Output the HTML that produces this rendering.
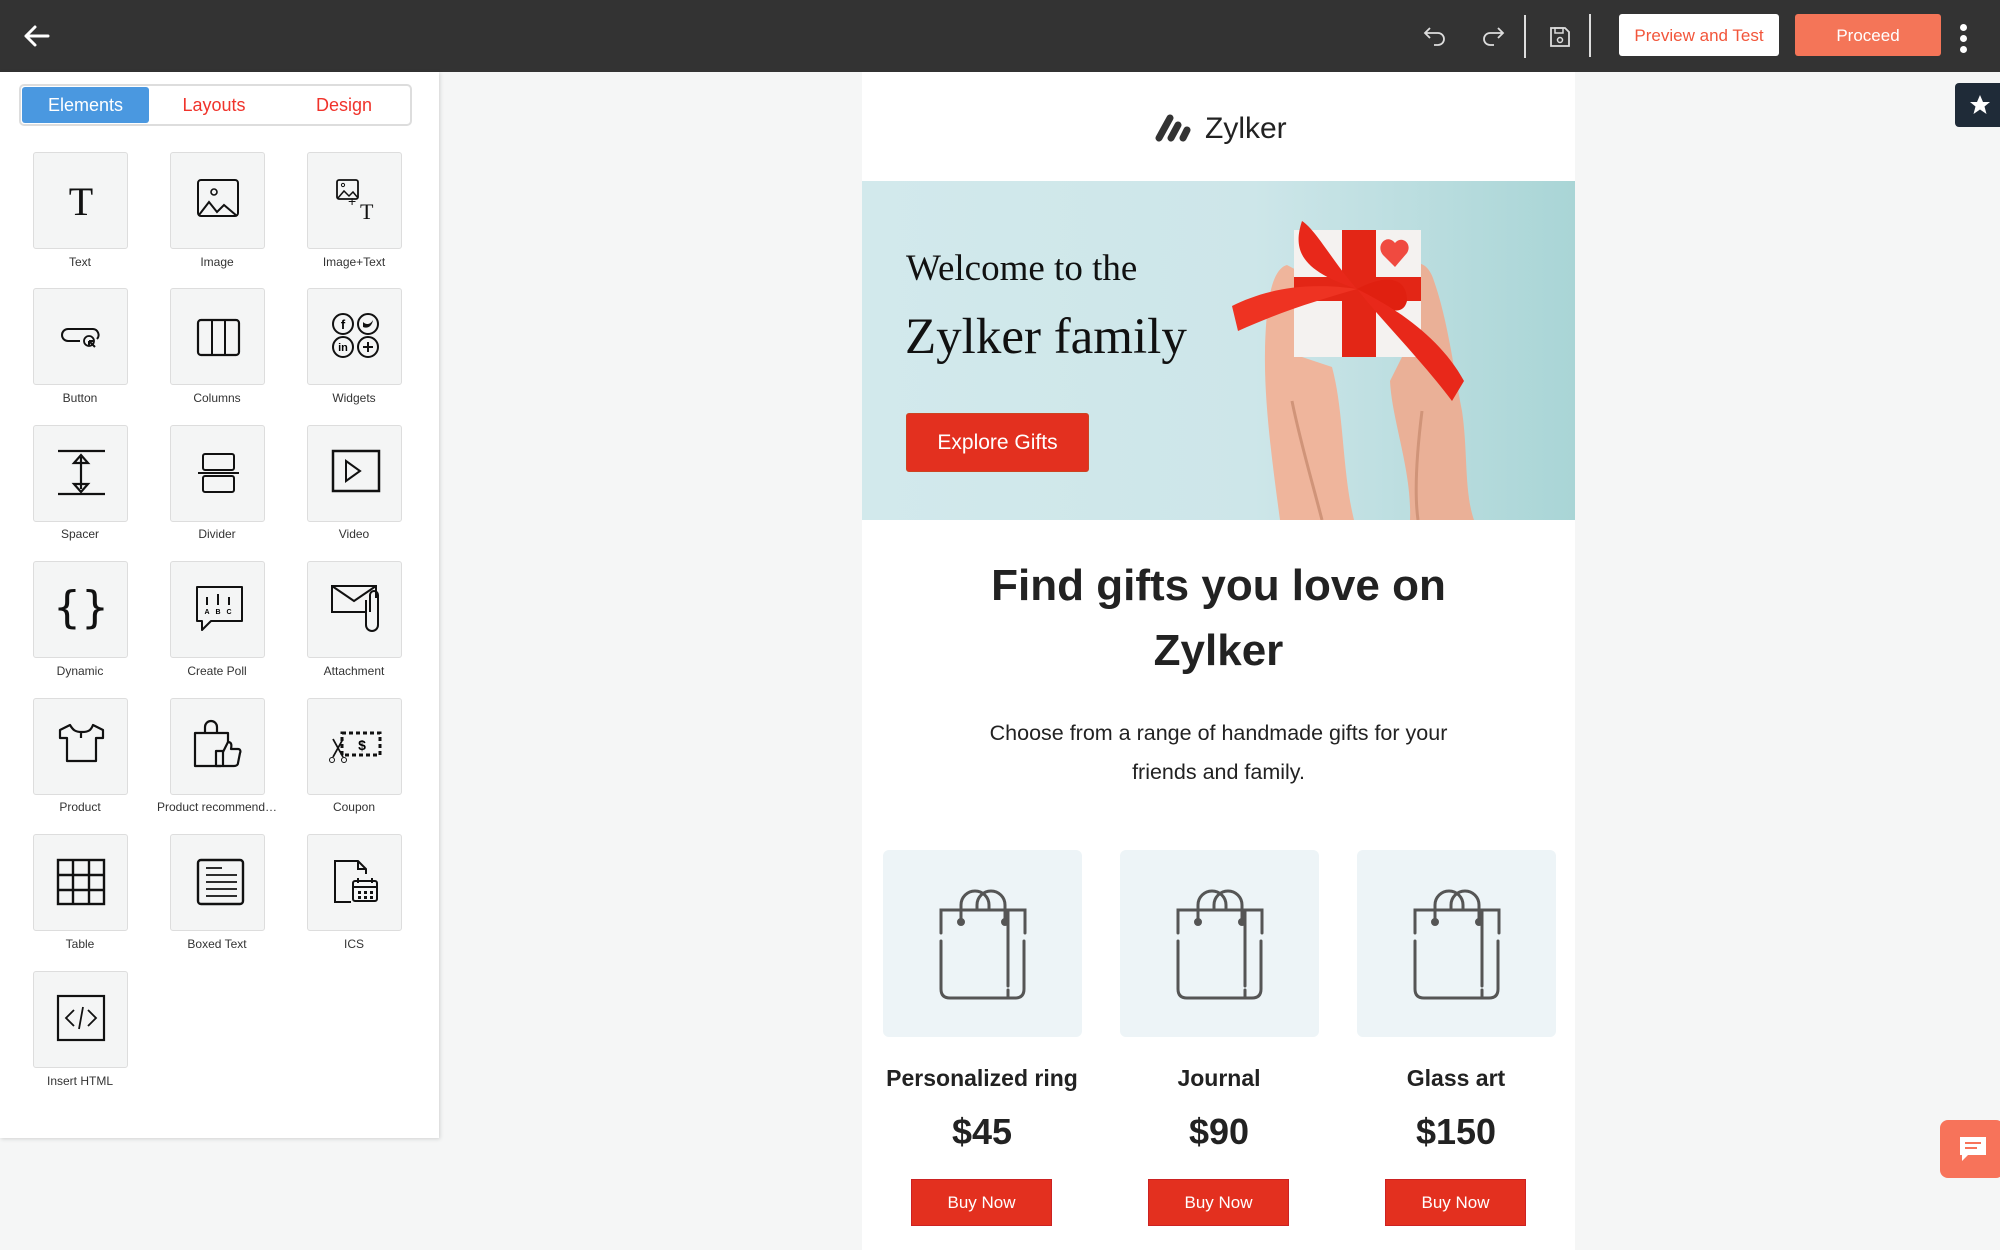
<!DOCTYPE html>
<html><head><meta charset="utf-8"><style>
*{box-sizing:border-box;margin:0;padding:0}
body{width:2000px;height:1250px;background:#f5f6f6;font-family:"Liberation Sans",Arial,sans-serif;position:relative;overflow:hidden}
.abs{position:absolute}
#top{left:0;top:0;width:2000px;height:72px;background:#333}
#panel{left:0;top:72px;width:439px;height:1066px;background:#fff;box-shadow:1px 1px 4px rgba(0,0,0,.15)}
.tabs{left:19px;top:84px;width:393px;height:42px;border:2px solid #ddd;border-radius:5px;background:#fff}
.tab{position:absolute;top:0;height:38px;line-height:38px;text-align:center;font-size:18px;color:#f0332b}
.tile{position:absolute;width:95px;height:97px;background:#f4f5f5;border:1.5px solid #ddd;border-radius:3px}
.tile svg{position:absolute;left:0;top:0}
.lbl{position:absolute;width:140px;text-align:center;font-size:12px;color:#333}
#canvas{left:862px;top:72px;width:713px;height:1178px;background:#fff}
.card{position:absolute;top:850px;width:199px;height:187px;background:#edf4f7;border-radius:6px}
.pname{position:absolute;top:1065px;width:240px;text-align:center;font-size:23px;font-weight:bold;color:#222}
.price{position:absolute;top:1111px;width:240px;text-align:center;font-size:36px;font-weight:bold;color:#222}
.buy{position:absolute;top:1179px;width:141px;height:47px;background:#e3301f;border:1px solid #c22;color:#fff;font-size:17px;line-height:45px;text-align:center}
</style></head><body>
<div id="top" class="abs">
<svg class="abs" style="left:22px;top:24px" width="28" height="24" viewBox="0 0 28 24"><path d="M26 12H4M13 3 4 12l9 9" stroke="#fff" stroke-width="3" fill="none" stroke-linecap="round" stroke-linejoin="round"/></svg>
<svg class="abs" style="left:1422px;top:24px" width="26" height="24" viewBox="0 0 26 24"><path d="M8 4 3 9l5 5M3 9h13a6 6 0 0 1 0 12h-4" stroke="#ddd" stroke-width="1.8" fill="none"/></svg>
<svg class="abs" style="left:1480px;top:24px" width="26" height="24" viewBox="0 0 26 24"><path d="M18 4l5 5-5 5M23 9H10a6 6 0 0 0 0 12h4" stroke="#ddd" stroke-width="1.8" fill="none"/></svg>
<div class="abs" style="left:1524px;top:15px;width:2px;height:43px;background:#ddd"></div>
<svg class="abs" style="left:1549px;top:26px" width="22" height="22" viewBox="0 0 22 22"><path d="M2 2h14l4 4v14H2z" stroke="#ddd" stroke-width="1.8" fill="none"/><rect x="6" y="2" width="8" height="5" stroke="#ddd" stroke-width="1.5" fill="none"/><circle cx="11" cy="14" r="2.5" stroke="#ddd" stroke-width="1.5" fill="none"/></svg>
<div class="abs" style="left:1589px;top:14px;width:2px;height:43px;background:#ddd"></div>
<div class="abs" style="left:1619px;top:14px;width:160px;height:42px;background:#fff;border-radius:3px;color:#f2553a;font-size:17px;line-height:44px;text-align:center">Preview and Test</div>
<div class="abs" style="left:1795px;top:14px;width:146px;height:42px;background:#f47558;border-radius:3px;color:#fff;font-size:17px;line-height:44px;text-align:center">Proceed</div>
<div class="abs" style="left:1960px;top:24px;width:7px;height:7px;border-radius:50%;background:#fff;box-shadow:0 11px 0 #fff,0 22px 0 #fff"></div>
</div>

<div id="panel" class="abs"></div>
<div class="tabs abs">
<div class="tab" style="left:1px;top:1px;width:127px;height:36px;line-height:36px;background:#4a98e0;color:#fff;border-radius:3px">Elements</div>
<div class="tab" style="left:128px;width:130px">Layouts</div>
<div class="tab" style="left:258px;width:130px">Design</div>
</div>

<div class="tile" style="left:33px;top:152px"><svg width="95" height="97"><text x="47" y="62" font-family="Liberation Serif" font-size="40" text-anchor="middle" fill="#111">T</text></svg></div>
<div class="lbl" style="left:10px;top:255px">Text</div>
<div class="tile" style="left:170px;top:152px"><svg width="95" height="97"><rect x="27" y="27" width="40" height="36" rx="3" stroke="#111" stroke-width="2" fill="none"/><circle cx="43" cy="39" r="3" stroke="#111" stroke-width="1.6" fill="none"/><path d="M28 62l10-13 8 10 7-7 13 11" stroke="#111" stroke-width="2" fill="none"/></svg></div>
<div class="lbl" style="left:147px;top:255px">Image</div>
<div class="tile" style="left:307px;top:152px"><svg width="95" height="97"><rect x="29" y="27" width="21" height="19" rx="2" stroke="#111" stroke-width="1.8" fill="none"/><circle cx="35" cy="32" r="1.6" stroke="#111" fill="none"/><path d="M30 45l6-7 5 5 4-4 5 6" stroke="#111" stroke-width="1.5" fill="none"/><text x="40" y="53" font-size="14" fill="#111">+</text><text x="52" y="66" font-family="Liberation Serif" font-size="22" fill="#111">T</text></svg></div>
<div class="lbl" style="left:284px;top:255px">Image+Text</div>

<div class="tile" style="left:33px;top:288px"><svg width="95" height="97"><path d="M46 52H34a6 6 0 0 1 0-12h25a6 6 0 0 1 4 10" stroke="#111" stroke-width="2" fill="none"/><circle cx="55" cy="52" r="5" stroke="#111" stroke-width="1.8" fill="none"/><path d="M55 52l6 6M55 52h4M55 52v4" stroke="#111" stroke-width="2"/></svg></div>
<div class="lbl" style="left:10px;top:391px">Button</div>
<div class="tile" style="left:170px;top:288px"><svg width="95" height="97"><rect x="27" y="31" width="41" height="35" rx="3" stroke="#111" stroke-width="2.2" fill="none"/><path d="M41 31v35M54 31v35" stroke="#111" stroke-width="2"/></svg></div>
<div class="lbl" style="left:147px;top:391px">Columns</div>
<div class="tile" style="left:307px;top:288px"><svg width="95" height="97"><g stroke="#111" stroke-width="2" fill="none"><circle cx="35" cy="35" r="10"/><circle cx="60" cy="35" r="10"/><circle cx="35" cy="58" r="10"/><circle cx="60" cy="58" r="10"/><path d="M55 58h10M60 53v10"/></g><text x="35" y="40" font-size="13" font-weight="bold" text-anchor="middle">f</text><text x="35" y="62" font-size="11" font-weight="bold" text-anchor="middle">in</text><path d="M55 33c3 3 7 3 10-2-1 6-5 9-10 7z" fill="#111"/></svg></div>
<div class="lbl" style="left:284px;top:391px">Widgets</div>

<div class="tile" style="left:33px;top:425px"><svg width="95" height="97"><g stroke="#111" stroke-width="2.2" fill="none"><path d="M24 25h47M24 68h47M47 31v32M40 37l7-8 7 8zM40 58l7 8 7-8z"/></g></svg></div>
<div class="lbl" style="left:10px;top:527px">Spacer</div>
<div class="tile" style="left:170px;top:425px"><svg width="95" height="97"><g stroke="#111" stroke-width="2" fill="none"><rect x="32" y="28" width="31" height="16" rx="2"/><rect x="32" y="50" width="31" height="16" rx="2"/><path d="M27 47h41"/></g></svg></div>
<div class="lbl" style="left:147px;top:527px">Divider</div>
<div class="tile" style="left:307px;top:425px"><svg width="95" height="97"><rect x="25" y="25" width="46" height="40" stroke="#111" stroke-width="2.5" fill="none"/><path d="M38 35l14 10-14 10z" stroke="#111" stroke-width="2" fill="none"/></svg></div>
<div class="lbl" style="left:284px;top:527px">Video</div>

<div class="tile" style="left:33px;top:561px"><svg width="95" height="97"><text x="47" y="60" font-size="44" text-anchor="middle" fill="#111" font-family="DejaVu Sans">{}</text></svg></div>
<div class="lbl" style="left:10px;top:664px">Dynamic</div>
<div class="tile" style="left:170px;top:561px"><svg width="95" height="97"><path d="M26 25h45v34H40l-9 9v-9h-5z" stroke="#111" stroke-width="2" fill="none" stroke-linejoin="round"/><path d="M36 35v8M47 32v11M58 35v8" stroke="#111" stroke-width="2"/><text x="36" y="52" font-size="7" font-weight="bold" text-anchor="middle">A</text><text x="47" y="52" font-size="7" font-weight="bold" text-anchor="middle">B</text><text x="58" y="52" font-size="7" font-weight="bold" text-anchor="middle">C</text></svg></div>
<div class="lbl" style="left:147px;top:664px">Create Poll</div>
<div class="tile" style="left:307px;top:561px"><svg width="95" height="97"><g stroke="#111" stroke-width="2" fill="none"><path d="M58 50H24V24h44v12"/><path d="M24 24l22 15 22-15"/><path d="M62 50V33a4 4 0 0 1 8 0v30a6 6 0 0 1-12 0V38"/></g></svg></div>
<div class="lbl" style="left:284px;top:664px">Attachment</div>

<div class="tile" style="left:33px;top:698px"><svg width="95" height="97"><path d="M36 26l-10 5v8h7v23h29V39h7v-8l-10-5c-2 5-4 7-11 7s-9-2-12-7zM47 33v6" stroke="#111" stroke-width="2.2" fill="none" stroke-linejoin="round"/></svg></div>
<div class="lbl" style="left:10px;top:800px">Product</div>
<div class="tile" style="left:170px;top:698px"><svg width="95" height="97"><g stroke="#111" stroke-width="2.2" fill="none" stroke-linejoin="round"><path d="M50 67H24V34h33v10"/><path d="M34 34v-6a6 6 0 0 1 12 0v6"/><rect x="45" y="52" width="7" height="15"/><path d="M52 53l5-10c3 0 4 2 3 7h7c2 0 3 2 2 4l-2 10c0 2-2 3-4 3H52"/></g></svg></div>
<div class="lbl" style="left:147px;top:800px">Product recommend…</div>
<div class="tile" style="left:307px;top:698px"><svg width="95" height="97"><rect x="34" y="34" width="38" height="22" stroke="#111" stroke-width="3" stroke-dasharray="4 3" fill="none"/><text x="54" y="51" font-size="14" font-weight="bold" text-anchor="middle">$</text><path d="M25 40l10 18M35 40l-10 18" stroke="#111" stroke-width="1.8"/><circle cx="24" cy="61" r="2.5" stroke="#111" fill="none"/><circle cx="36" cy="61" r="2.5" stroke="#111" fill="none"/></svg></div>
<div class="lbl" style="left:284px;top:800px">Coupon</div>

<div class="tile" style="left:33px;top:834px"><svg width="95" height="97"><g stroke="#111" stroke-width="2.4" fill="none"><rect x="24" y="25" width="46" height="44"/><path d="M39 25v44M55 25v44M24 40h46M24 55h46"/></g></svg></div>
<div class="lbl" style="left:10px;top:937px">Table</div>
<div class="tile" style="left:170px;top:834px"><svg width="95" height="97"><rect x="27" y="25" width="45" height="44" rx="3" stroke="#111" stroke-width="2.4" fill="none"/><path d="M35 33h16M35 40h31M35 47h31M35 54h31M35 61h31" stroke="#111" stroke-width="1.8"/></svg></div>
<div class="lbl" style="left:147px;top:937px">Boxed Text</div>
<div class="tile" style="left:307px;top:834px"><svg width="95" height="97"><g stroke="#111" stroke-width="2" fill="none"><path d="M43 67h-16V26h23l8 8v5M50 26v8h8"/><rect x="45" y="46" width="24" height="20" rx="2"/><path d="M45 52h24M50 43v5M64 43v5"/></g><g fill="#111"><rect x="50" y="56" width="3" height="3"/><rect x="56" y="56" width="3" height="3"/><rect x="62" y="56" width="3" height="3"/><rect x="50" y="61" width="3" height="3"/><rect x="56" y="61" width="3" height="3"/><rect x="62" y="61" width="3" height="3"/></g></svg></div>
<div class="lbl" style="left:284px;top:937px">ICS</div>

<div class="tile" style="left:33px;top:971px"><svg width="95" height="97"><rect x="24" y="24" width="46" height="44" stroke="#111" stroke-width="2.2" fill="none"/><path d="M40 38l-8 8 8 8M54 38l8 8-8 8M49 35l-4 22" stroke="#111" stroke-width="1.8" fill="none"/></svg></div>
<div class="lbl" style="left:10px;top:1074px">Insert HTML</div>

<div class="abs" style="left:1955px;top:83px;width:50px;height:44px;background:#1f2b38;border-radius:4px"><svg style="position:absolute;left:13px;top:10px" width="24" height="24" viewBox="0 0 24 24"><path d="M12 2l3 7h7l-5.5 4.5 2 7.5L12 16.5 5.5 21l2-7.5L2 9h7z" fill="#fff"/></svg></div>
<div class="abs" style="left:1940px;top:1120px;width:64px;height:58px;background:#f7735a;border-radius:8px"><svg style="position:absolute;left:18px;top:15px" width="30" height="28" viewBox="0 0 30 28"><path d="M2 2h26v18H10l-6 6v-6H2z" fill="#fff"/><path d="M7 8h16M7 13h12" stroke="#f7735a" stroke-width="2"/></svg></div>

<div id="canvas" class="abs"></div>
<svg class="abs" style="left:1153px;top:113px" width="44" height="30" viewBox="0 0 44 30"><g stroke="#333" stroke-width="7" stroke-linecap="round"><path d="M6 25L17 5M18 25l7-13M30 25l4-8"/></g></svg>
<div class="abs" style="left:1205px;top:112px;font-size:30px;color:#222">Zylker</div>

<div class="abs" style="left:862px;top:181px;width:713px;height:339px;background:linear-gradient(90deg,#d2e9ec 0%,#cde6e9 55%,#a9d5d6 100%)"></div>
<svg class="abs" style="left:862px;top:181px" width="713" height="339" viewBox="0 0 713 339">
<path d="M418 339C410 280 402 220 403 170C404 120 410 88 425 84L440 92L440 176L470 186C482 230 480 290 492 339Z" fill="#efb59c"/>
<path d="M548 339C550 290 530 240 528 200L540 176L541 100C550 74 566 80 572 100C586 140 592 190 600 230C606 270 602 310 612 339Z" fill="#eab097"/>
<path d="M430 220c8 40 20 80 30 119" stroke="#d09479" stroke-width="3" fill="none"/>
<path d="M560 230c-5 40-8 80-4 109" stroke="#d09479" stroke-width="3" fill="none"/>
<rect x="432" y="49" width="127" height="127" fill="#f4f2f0"/>
<rect x="480" y="49" width="34" height="127" fill="#e32616"/>
<rect x="432" y="96" width="127" height="24" fill="#e32616"/>
<path d="M533 62c-8-10-20 2-12 12l12 12 12-14c6-10-6-18-12-10z" fill="#f04a40"/>
<path d="M495 108C470 80 455 50 440 40C430 70 440 90 495 108Z" fill="#e8281a"/>
<path d="M495 108C440 100 400 110 370 125L376 150C420 130 460 118 495 108Z" fill="#ee3322"/>
<path d="M495 108C530 90 545 100 545 120C540 140 515 125 495 108Z" fill="#e02010"/>
<path d="M495 108C520 140 560 180 590 220L602 200C580 160 540 130 495 108Z" fill="#e8281a"/>
</svg>
<div class="abs" style="left:906px;top:247px;font-family:'Liberation Serif',serif;font-size:37px;color:#111">Welcome to the</div>
<div class="abs" style="left:905px;top:308px;font-family:'Liberation Serif',serif;font-size:51px;color:#111">Zylker family</div>
<div class="abs" style="left:906px;top:413px;width:183px;height:59px;background:#e3301f;border:1px solid #c42;border-radius:3px;color:#fff;font-size:21px;line-height:57px;text-align:center">Explore Gifts</div>

<div class="abs" style="left:862px;top:553px;width:713px;text-align:center;font-size:44px;font-weight:bold;color:#222;line-height:65px">Find gifts you love on<br>Zylker</div>
<div class="abs" style="left:862px;top:714px;width:713px;text-align:center;font-size:21.5px;color:#222;line-height:39px">Choose from a range of handmade gifts for your<br>friends and family.</div>

<svg width="0" height="0" style="position:absolute"><defs><g id="bag" stroke="#555" stroke-width="3" fill="none" stroke-linecap="round"><path d="M58 83V60h84v23M58 91v48q0 9 9 9h65q9 0 9-9V91M125 60v76M125 140v8"/><path d="M78 72V55a14 14 0 0 1 28 0v5M94 60v-5a14 14 0 0 1 28 0v17"/><circle cx="78" cy="72" r="2.5" fill="#555"/><circle cx="122" cy="72" r="2.5" fill="#555"/></g></defs></svg>
<div class="card" style="left:883px"><svg width="199" height="187"><use href="#bag"/></svg></div>
<div class="card" style="left:1120px"><svg width="199" height="187"><use href="#bag"/></svg></div>
<div class="card" style="left:1357px"><svg width="199" height="187"><use href="#bag"/></svg></div>
<div class="pname" style="left:862px">Personalized ring</div>
<div class="pname" style="left:1099px">Journal</div>
<div class="pname" style="left:1336px">Glass art</div>
<div class="price" style="left:862px">$45</div>
<div class="price" style="left:1099px">$90</div>
<div class="price" style="left:1336px">$150</div>
<div class="buy" style="left:911px">Buy Now</div>
<div class="buy" style="left:1148px">Buy Now</div>
<div class="buy" style="left:1385px">Buy Now</div>
</body></html>
